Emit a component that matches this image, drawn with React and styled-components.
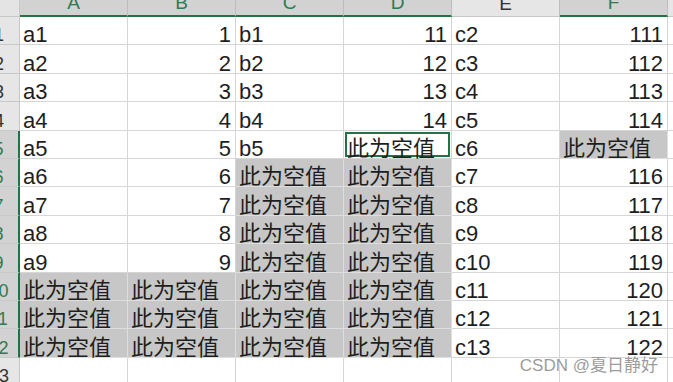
import React from 'react';
import styled, { createGlobalStyle } from 'styled-components';

const GlobalStyle = createGlobalStyle`
  html, body {
    margin: 0;
    padding: 0;
    background: #ffffff;
    overflow: hidden;
  }
  body {
    font-family: "Liberation Sans", "Noto Sans CJK SC", sans-serif;
  }
`;

const EMPTY = '此为空值';

const Page = styled.div`
  position: relative;
  width: 673px;
  height: 382px;
  overflow: hidden;
`;

// the sheet is cropped on the top and left, like the screenshot
const Sheet = styled.div`
  display: grid;
  grid-template-columns: 41px repeat(6, 108px) 60px;
  grid-template-rows: 20px repeat(13, 28.4px);
  margin: -3px 0 0 -21px;
  color: #1e1e1e;
`;

const Corner = styled.div`
  background: #e4e4e4;
  border-right: 1px solid #c8c8c8;
  border-bottom: 1px solid #c8c8c8;
`;

const ColHeader = styled.div`
  box-sizing: border-box;
  display: flex;
  align-items: flex-end;
  justify-content: center;
  padding-bottom: 3px;
  font-size: 19px;
  line-height: 18px;
  background: ${p => (p.$selected ? '#d2d2d2' : '#e6e6e6')};
  color: ${p => (p.$selected ? '#2f7a55' : '#333333')};
  border-right: 1px solid #bdbdbd;
  border-bottom: ${p => (p.$selected ? '2px solid #217346' : '1px solid #c6c6c6')};
`;

const RowHeader = styled.div`
  box-sizing: border-box;
  display: flex;
  align-items: flex-end;
  justify-content: center;
  padding-bottom: 1px;
  font-size: 18px;
  line-height: 16px;
  background: ${p => (p.$selected ? '#d2d2d2' : '#e6e6e6')};
  color: ${p => (p.$selected ? '#2f7a55' : '#333333')};
  border-bottom: 1px solid #c9c9c9;
  border-right: ${p => (p.$selected ? '2px solid #217346' : '1px solid #c6c6c6')};
`;

const Cell = styled.div`
  box-sizing: border-box;
  display: flex;
  align-items: flex-end;
  justify-content: ${p => (p.$align === 'right' ? 'flex-end' : 'flex-start')};
  padding: 0 4px 0 3px;
  font-size: 22px;
  line-height: 18px;
  white-space: nowrap;
  background: ${p => (p.$shade ? '#c7c7c7' : '#ffffff')};
  border-right: 1px solid ${p => (p.$shade ? '#dedede' : '#d6d6d6')};
  border-bottom: 1px solid ${p => (p.$shade ? '#dedede' : '#d6d6d6')};
  box-shadow: ${p =>
    p.$active ? 'inset 0 0 0 1px #ffffff, inset 0 0 0 3px #217346' : 'none'};
`;

const Watermark = styled.div`
  position: absolute;
  right: 15px;
  bottom: 6px;
  font-family: "Liberation Sans", "Noto Sans CJK SC", sans-serif;
  font-size: 17px;
  line-height: 20px;
  color: #9c9c9c;
  white-space: nowrap;
  text-shadow: 0 0 2px #ffffff;
`;

const columns = ['A', 'B', 'C', 'D', 'E', 'F', 'G'];
const selectedCols = ['A', 'B', 'C', 'D', 'F'];

const txt = v => ({ v, align: 'left' });
const num = v => ({ v, align: 'right' });
const gray = { v: EMPTY, align: 'left', shade: true };

const rows = [
  [txt('a1'), num(1), txt('b1'), num(11), txt('c2'), num(111)],
  [txt('a2'), num(2), txt('b2'), num(12), txt('c3'), num(112)],
  [txt('a3'), num(3), txt('b3'), num(13), txt('c4'), num(113)],
  [txt('a4'), num(4), txt('b4'), num(14), txt('c5'), num(114)],
  [txt('a5'), num(5), txt('b5'), { v: EMPTY, align: 'left', active: true }, txt('c6'), gray],
  [txt('a6'), num(6), gray, gray, txt('c7'), num(116)],
  [txt('a7'), num(7), gray, gray, txt('c8'), num(117)],
  [txt('a8'), num(8), gray, gray, txt('c9'), num(118)],
  [txt('a9'), num(9), gray, gray, txt('c10'), num(119)],
  [gray, gray, gray, gray, txt('c11'), num(120)],
  [gray, gray, gray, gray, txt('c12'), num(121)],
  [gray, gray, gray, gray, txt('c13'), num(122)],
  [txt(''), txt(''), txt(''), txt(''), txt(''), txt('')],
];

export default function App() {
  return (
    <Page>
      <GlobalStyle />
      <Sheet>
        <Corner />
        {columns.map(c => (
          <ColHeader key={c} $selected={selectedCols.includes(c)}>
            {c === 'G' ? '' : c}
          </ColHeader>
        ))}
        {rows.map((row, r) => (
          <React.Fragment key={r}>
            <RowHeader $selected={r >= 4 && r <= 11}>{r + 1}</RowHeader>
            {row.map((cell, c) => (
              <Cell
                key={c}
                $align={cell.align}
                $shade={cell.shade}
                $active={cell.active}
              >
                {cell.v}
              </Cell>
            ))}
            <Cell />
          </React.Fragment>
        ))}
      </Sheet>
      <Watermark>CSDN @夏日静好</Watermark>
    </Page>
  );
}
